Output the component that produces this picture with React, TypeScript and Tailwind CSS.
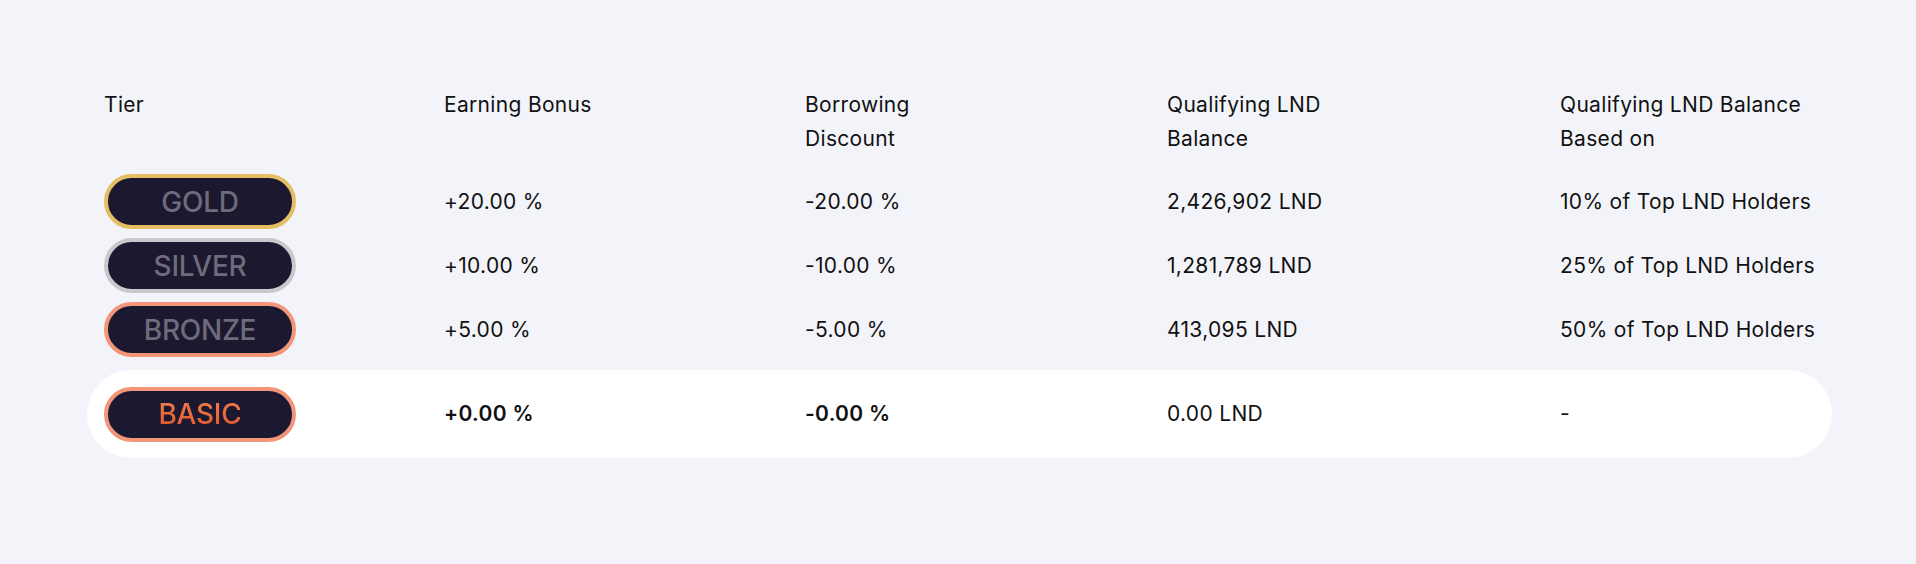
import React from 'react';

type Tier = {
  name: string;
  border: string;
  earning: string;
  borrowing: string;
  balance: string;
  basedOn: string;
};

const TIERS: Tier[] = [
  { name: 'GOLD', border: 'border-[#e3be62]', earning: '+20.00 %', borrowing: '-20.00 %', balance: '2,426,902 LND', basedOn: '10% of Top LND Holders' },
  { name: 'SILVER', border: 'border-[#c9c9cd]', earning: '+10.00 %', borrowing: '-10.00 %', balance: '1,281,789 LND', basedOn: '25% of Top LND Holders' },
  { name: 'BRONZE', border: 'border-[#f2967a]', earning: '+5.00 %', borrowing: '-5.00 %', balance: '413,095 LND', basedOn: '50% of Top LND Holders' },
];

const cols = 'grid grid-cols-[340px_361px_362px_393px_1fr] items-center';

function Badge({ name, border, active }: { name: string; border: string; active?: boolean }) {
  return (
    <div
      className={`w-[192px] h-[55px] rounded-full border-[4px] ${border} bg-[#1c1830] flex items-center justify-center`}
    >
      <span
        className={
          active
            ? 'text-[28px] font-medium leading-none tracking-[-0.01em] bg-gradient-to-b from-[#f07d4c] to-[#e2572e] bg-clip-text text-transparent'
            : 'text-[28px] font-medium leading-none tracking-[-0.01em] text-[#6e6b7c]'
        }
      >
        {name}
      </span>
    </div>
  );
}

export default function App() {
  return (
    <div className="w-full h-[564px] bg-[#f3f4f9] pt-[88px] font-['Inter',sans-serif] text-[#111111] tracking-[0.02em]">
      <div className="ml-[87px] w-[1745px]">
        {/* header */}
        <div className={`${cols} !items-start pl-[17px] text-[21px] leading-[34px]`}>
          <div>Tier</div>
          <div>Earning Bonus</div>
          <div>
            Borrowing
            <br />
            Discount
          </div>
          <div>
            Qualifying LND
            <br />
            Balance
          </div>
          <div>
            Qualifying LND Balance
            <br />
            Based on
          </div>
        </div>

        {/* tier rows */}
        <div className="mt-[18px] flex flex-col gap-[9px] text-[21px]">
          {TIERS.map((t) => (
            <div key={t.name} className={`${cols} pl-[17px] h-[55px]`}>
              <Badge name={t.name} border={t.border} />
              <div>{t.earning}</div>
              <div>{t.borrowing}</div>
              <div>{t.balance}</div>
              <div>{t.basedOn}</div>
            </div>
          ))}
        </div>

        {/* current tier */}
        <div className={`${cols} mt-[13px] pl-[17px] h-[88px] bg-white rounded-full text-[21px]`}>
          <Badge name="BASIC" border="border-[#f2967a]" active />
          <div className="font-semibold">+0.00 %</div>
          <div className="font-semibold">-0.00 %</div>
          <div>0.00 LND</div>
          <div>-</div>
        </div>
      </div>
    </div>
  );
}
